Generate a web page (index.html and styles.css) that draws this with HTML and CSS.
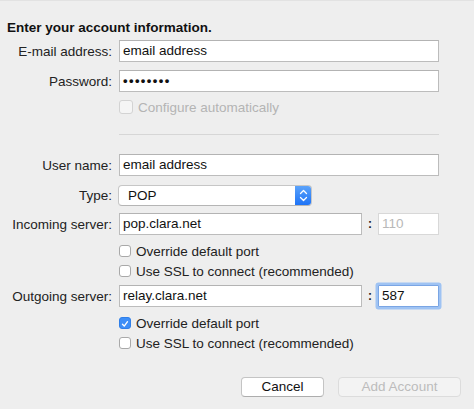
FILE: index.html
```html
<!DOCTYPE html>
<html>
<head>
<meta charset="utf-8">
<link rel="stylesheet" href="styles.css">
</head>
<body>
<div class="sheet">
  <div class="heading">Enter your account information.</div>

  <div class="row r-email">
    <div class="label">E-mail address:</div>
    <div class="field full">email address</div>
  </div>
  <div class="row r-pass">
    <div class="label">Password:</div>
    <div class="field full dots">••••••••</div>
  </div>
  <div class="row r-auto">
    <div class="label"></div>
    <div class="check disabled"><span class="box"></span><span class="ctext">Configure automatically</span></div>
  </div>
  <div class="row r-sep">
    <div class="label"></div>
    <div class="sep"></div>
  </div>
  <div class="row r-user">
    <div class="label">User name:</div>
    <div class="field full">email address</div>
  </div>
  <div class="row r-type">
    <div class="label">Type:</div>
    <div class="popup">
      <span class="ptext">POP</span>
      <span class="stepper">
        <svg width="17" height="21" viewBox="0 0 17 21"><path d="M5.5 8.5 L8.5 5.5 L11.5 8.5" fill="none" stroke="#fff" stroke-width="1.3" stroke-linecap="round" stroke-linejoin="round"/><path d="M5.5 12.5 L8.5 15.5 L11.5 12.5" fill="none" stroke="#fff" stroke-width="1.3" stroke-linecap="round" stroke-linejoin="round"/></svg>
      </span>
    </div>
  </div>
  <div class="row r-in">
    <div class="label">Incoming server:</div>
    <div class="field server">pop.clara.net</div>
    <div class="colon">:</div>
    <div class="field port off">110</div>
  </div>
  <div class="row r-c1">
    <div class="label"></div>
    <div class="check"><span class="box"></span><span class="ctext">Override default port</span></div>
  </div>
  <div class="row r-c2">
    <div class="label"></div>
    <div class="check"><span class="box"></span><span class="ctext">Use SSL to connect (recommended)</span></div>
  </div>
  <div class="row r-out">
    <div class="label">Outgoing server:</div>
    <div class="field server">relay.clara.net</div>
    <div class="colon">:</div>
    <div class="field port focus">587</div>
  </div>
  <div class="row r-c3">
    <div class="label"></div>
    <div class="check"><span class="box on"><svg width="12" height="12" viewBox="0 0 12 12"><path d="M3 6.3 L5.1 8.6 L9 3.2" fill="none" stroke="#fff" stroke-width="1.6" stroke-linecap="round" stroke-linejoin="round"/></svg></span><span class="ctext">Override default port</span></div>
  </div>
  <div class="row r-c4">
    <div class="label"></div>
    <div class="check"><span class="box"></span><span class="ctext">Use SSL to connect (recommended)</span></div>
  </div>
  <div class="buttons">
    <div class="btn cancel">Cancel</div>
    <div class="btn add">Add Account</div>
  </div>
</div>
</body>
</html>
```

FILE: styles.css
```css
html, body {
  margin: 0;
  padding: 0;
}
body {
  background: #eeeeee;
  border-top: 1px solid #e2e2e2;
  font-family: "Liberation Sans", Arial, sans-serif;
  font-size: 13.5px;
  color: #222;
  width: 474px;
  height: 408px;
  overflow: hidden;
}
.sheet {
  padding-left: 7px;
  padding-top: 19px;
}
.heading {
  font-weight: bold;
  line-height: 16px;
  height: 16px;
  color: #111;
}
.row {
  display: flex;
  align-items: center;
}
.label {
  width: 105px;
  margin-right: 7px;
  text-align: right;
  flex: none;
  white-space: nowrap;
}
.r-email { margin-top: 4px; height: 22px; }
.r-pass { margin-top: 8px; height: 22px; }
.r-auto { margin-top: 8px; height: 14px; }
.r-sep { margin-top: 20px; height: 1px; }
.r-user { margin-top: 19px; height: 22px; }
.r-type { margin-top: 9px; height: 21px; }
.r-in { margin-top: 7px; height: 22px; }
.r-c1 { margin-top: 10px; height: 12px; }
.r-c2 { margin-top: 8px; height: 12px; }
.r-out { margin-top: 8px; height: 22px; }
.r-c3 { margin-top: 10px; height: 12px; }
.r-c4 { margin-top: 8px; height: 12px; }

.field {
  box-sizing: border-box;
  height: 22px;
  background: #fff;
  border: 1px solid #bcbcbc;
  border-top-color: #b3b3b3;
  padding: 0 3px;
  line-height: 20px;
  white-space: nowrap;
  color: #111;
}
.full { width: 320px; }
.server { width: 243px; }
.colon {
  width: 16px;
  text-align: center;
  color: #222;
  font-weight: bold;
  font-size: 12px;
}
.port { width: 61px; }
.port.off {
  border-color: #d8d8d8;
  color: #b8b8b8;
}
.port.focus {
  border-color: #7aa5e4;
  box-shadow: 0 0 0 2.5px #9fc3f3;
  border-radius: 1px;
}
.dots {
  letter-spacing: 1.4px;
  font-size: 13px;
  font-weight: bold;
}
.sep {
  width: 320px;
  height: 1px;
  background: #d6d6d6;
}
.popup {
  box-sizing: border-box;
  width: 194px;
  height: 21px;
  margin-left: -1px;
  background: #fff;
  border: 1px solid #c6c6c6;
  border-bottom-color: #b5b5b5;
  border-radius: 4px;
  display: flex;
  align-items: center;
  justify-content: space-between;
  overflow: hidden;
}
.ptext {
  padding-left: 9px;
  color: #111;
}
.stepper {
  width: 17px;
  height: 21px;
  margin-right: -1px;
  margin-top: -1px;
  margin-bottom: -1px;
  background: linear-gradient(#5ea5fb, #1b71f6);
  border-radius: 0 4px 4px 0;
  display: flex;
}
.check {
  display: flex;
  align-items: center;
  white-space: nowrap;
}
.box {
  box-sizing: border-box;
  width: 12px;
  height: 12px;
  border: 1px solid #a9a9a9;
  border-radius: 3px;
  background: #fff;
  margin-right: 5px;
  display: flex;
}
.box.on {
  background: #3d8ef7;
  border-color: #2f7fe9;
}
.r-auto .box {
  width: 14px;
  height: 14px;
}
.check.disabled .box {
  border-color: #d3d3d3;
  background: #f5f5f5;
}
.check.disabled .ctext {
  color: #b4b4b4;
}
.ctext {
  color: #222;
}
.buttons {
  display: flex;
  margin-top: 28px;
  padding-left: 234px;
  gap: 14px;
}
.btn {
  box-sizing: border-box;
  height: 20px;
  line-height: 18px;
  border-radius: 4px;
  text-align: center;
  border: 1px solid #c4c4c4;
}
.cancel {
  width: 83px;
  background: #fff;
  border-bottom-color: #adadad;
  color: #111;
}
.add {
  width: 123px;
  background: #f3f3f3;
  border-color: #dcdcdc;
  color: #bcbcbc;
}
```
